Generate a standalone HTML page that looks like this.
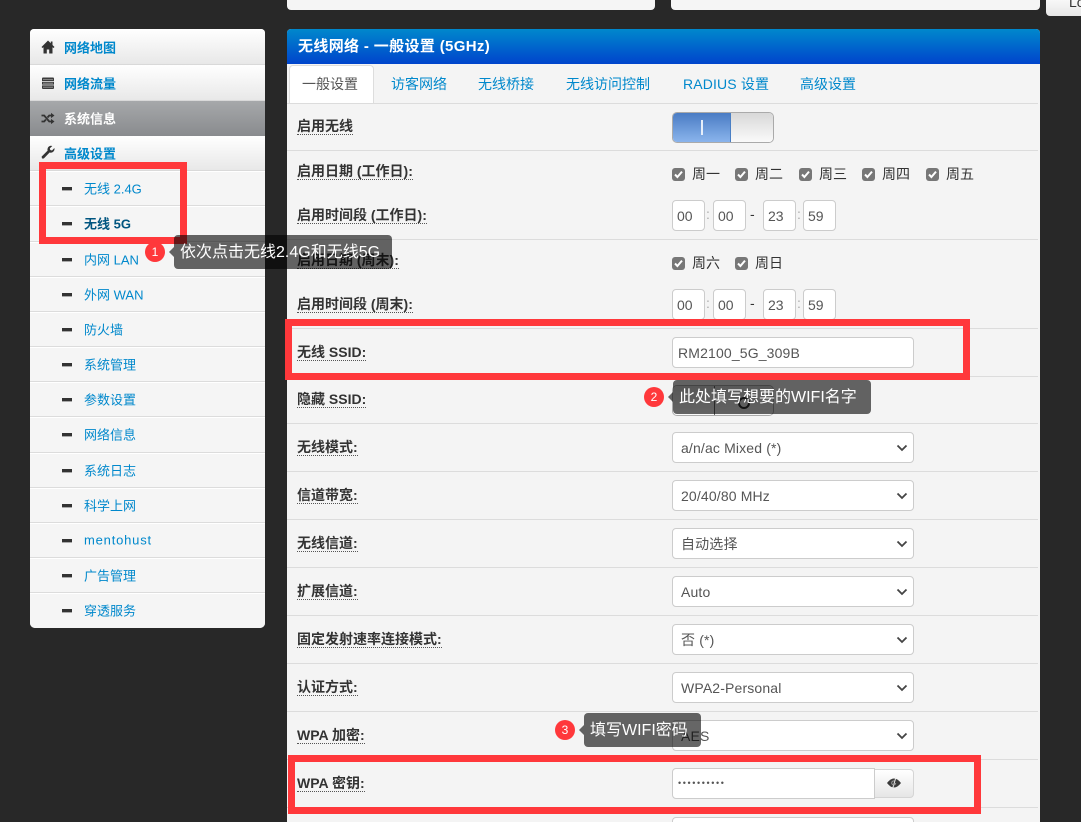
<!DOCTYPE html>
<html lang="zh">
<head>
<meta charset="utf-8">
<title>无线网络</title>
<style>
*{box-sizing:border-box}
html,body{margin:0;padding:0;width:1081px;height:822px;overflow:hidden;background:#282828;font-family:"Liberation Sans","Noto Sans CJK SC",sans-serif;font-size:13px;color:#333}
.a{position:absolute}
#side{left:30px;top:29px;width:235px;height:599px;background:#f5f5f5;border-radius:4px 4px 5px 5px;overflow:hidden}
.m{position:absolute;left:0;width:235px;background:linear-gradient(#fff,#e8e8e8);border-bottom:1px solid #d9d9d9;color:#0088cc;font-weight:bold;font-size:13px}
.m span{position:absolute;left:34px;top:50%;transform:translateY(-50%);white-space:nowrap}
.m svg{position:absolute;left:11px}
.act{background:linear-gradient(#a6a8aa,#898b8e);color:#fff;border:0}
.s{position:absolute;left:0;width:235px;background:#f5f5f5;border-bottom:1px solid #dcdcdc;border-top:1px solid #fff;color:#0088cc;font-size:13px}
.s i{position:absolute;left:32px;top:15px;width:10px;height:3px;background:#333;box-shadow:0 1px 0 #aaa}
.s b{position:absolute;left:54px;top:50%;transform:translateY(calc(-50% - 1px));font-weight:normal;white-space:nowrap}
#main{left:287px;top:29px;width:753px;height:793px;background:#f4f4f4;border-radius:4px 4px 0 0;overflow:hidden}
#hd{left:0;top:0;width:753px;height:35px;background:linear-gradient(#0088cc,#0044cc);color:#fff;font-weight:bold;font-size:15px;letter-spacing:.35px;line-height:36px;padding-left:11px}
.tab{position:absolute;top:37px;color:#0088cc;font-size:14px;line-height:36px;white-space:nowrap}
.ln{position:absolute;left:0;width:751px;height:1px;background:#dcdcdc}
.lb{position:absolute;left:10px;font-weight:bold;font-size:14px;padding-top:2px;line-height:15px;border-bottom:1px dotted #555;white-space:nowrap;color:#333}
.ck{position:absolute;width:13px;height:13px;background:#777;border-radius:3px}
.ck svg{position:absolute;left:1px;top:1px}
.ct{position:absolute;font-size:14px;line-height:16px;white-space:nowrap}
.t{position:absolute;width:33px;height:31px;background:#fff;border:1px solid #ccc;border-radius:4px;font-size:14px;line-height:30px;padding-left:4px;color:#555}
.sel,.inp{position:absolute;left:385px;width:242px;height:31px;background:#fff;border:1px solid #ccc;border-radius:4px;font:14px "Liberation Sans","Noto Sans CJK SC",sans-serif;letter-spacing:.15px;color:#555;line-height:30px;padding-left:8px}
.sel svg{position:absolute;right:5px;top:11px}
.sw{position:absolute;left:385px;width:102px;height:31px;border:1px solid #aaa;border-radius:5px;overflow:hidden}
.r{position:absolute;border:7px solid #ff383b}
.tip{position:absolute;background:rgba(0,0,0,.6);border-radius:4px;color:#fff;font-size:16px;height:34px;line-height:36px;padding-left:6px;white-space:nowrap}
.tip:before{content:"";position:absolute;left:-5px;top:12px;border:5px solid transparent;border-left:0;border-right-color:rgba(0,0,0,.6)}
.bd{position:absolute;width:20px;height:20px;border-radius:50%;background:#ff383b;color:#fff;font-size:12px;line-height:20px;text-align:center}
</style>
</head>
<body>
<div class="a" style="left:287px;top:-5px;width:368px;height:15px;background:#f5f5f5;border-radius:4px"></div>
<div class="a" style="left:671px;top:-5px;width:369px;height:15px;background:#f5f5f5;border-radius:4px"></div>
<div class="a" style="left:1046px;top:-6px;width:50px;height:22px;background:linear-gradient(#fff,#e6e6e6);border-radius:4px;color:#333;font-size:14px;line-height:17px;padding-left:23px">Lo</div>

<div id="side" class="a">
 <div class="m" style="top:0;height:36px"><svg style="top:11px" width="14" height="14" viewBox="0 0 14 14"><path d="M7 .5 .5 7 1.5 8 2.5 7.2V13.5H5.8V9.5H8.2V13.5H11.5V7.2L12.5 8 13.5 7 11.5 5V1.5H9.8V3.3z" fill="#333"/></svg><span>网络地图</span></div>
 <div class="m" style="top:36px;height:36px"><svg style="top:12px" width="14" height="14" viewBox="0 0 14 14"><path d="M1 1.5Q1 .5 2 .5H12Q13 .5 13 1.5V4H1zM1 4.8H13V7.6H1zM1 8.4H13V11Q13 12 12 12H2Q1 12 1 11z" fill="#3c3c3c"/><path d="M2 2.4H12M2 6.2H12M2 10.2H12" stroke="#9a9a9a" stroke-width=".8"/></svg><span>网络流量</span></div>
 <div class="m act" style="top:72px;height:35px"><svg style="top:11px" width="14" height="14" viewBox="0 0 14 14"><path d="M0.5 3.5H3.2L8.2 9.5H10.2M0.5 9.5H3.2L4.9 7.5M6.5 5.5L8.2 3.5H10.2" fill="none" stroke="#333" stroke-width="1.8"/><path d="M10 .9 13.5 3.5 10 6.1zM10 6.9 13.5 9.5 10 12.1z" fill="#333"/></svg><span style="margin-top:-1px">系统信息</span></div>
 <div class="m" style="top:107px;height:35px"><svg style="top:9px" width="14" height="14" viewBox="0 0 14 14"><path d="M1 13.5 .6 11.6 6.6 5.6Q6 2.6 8.3 1.2 9.8.4 11.3 1L8.8 3.4 9.3 5 11 5.5 13.4 3Q13.8 5 12.6 6.4 10.9 8.2 8.6 7.5L2.8 13.5z" fill="#333"/></svg><span>高级设置</span></div>
 <div class="s" style="top:142px;height:35px"><i></i><b>无线 2.4G</b></div>
 <div class="s" style="top:177px;height:36px"><i></i><b style="font-weight:bold;color:#005580">无线 5G</b></div>
 <div class="s" style="top:213px;height:35px"><i></i><b>内网 LAN</b></div>
 <div class="s" style="top:248px;height:35px"><i></i><b>外网 WAN</b></div>
 <div class="s" style="top:283px;height:35px"><i></i><b>防火墙</b></div>
 <div class="s" style="top:318px;height:35px"><i></i><b>系统管理</b></div>
 <div class="s" style="top:353px;height:35px"><i></i><b>参数设置</b></div>
 <div class="s" style="top:388px;height:36px"><i></i><b>网络信息</b></div>
 <div class="s" style="top:424px;height:35px"><i></i><b>系统日志</b></div>
 <div class="s" style="top:459px;height:35px"><i></i><b>科学上网</b></div>
 <div class="s" style="top:494px;height:35px"><i></i><b style="letter-spacing:.8px">mentohust</b></div>
 <div class="s" style="top:529px;height:35px"><i></i><b>广告管理</b></div>
 <div class="s" style="top:564px;height:35px;border-bottom:0"><i></i><b>穿透服务</b></div>
</div>

<div id="main" class="a">
 <div id="hd" class="a">无线网络 - 一般设置 (5GHz)</div>
 <div class="a" style="left:2px;top:36px;width:85px;height:39px;background:#fff;border:1px solid #ddd;border-bottom:0;border-radius:4px 4px 0 0"></div>
 <div class="tab" style="left:15px;color:#555">一般设置</div>
 <div class="tab" style="left:104px">访客网络</div>
 <div class="tab" style="left:191px">无线桥接</div>
 <div class="tab" style="left:279px">无线访问控制</div>
 <div class="tab" style="left:396px;letter-spacing:.15px">RADIUS 设置</div>
 <div class="tab" style="left:513px">高级设置</div>
 <div class="ln" style="top:74px"></div>
 <div class="ln" style="top:121px"></div>
 <div class="ln" style="top:210px"></div>
 <div class="ln" style="top:299px"></div>
 <div class="ln" style="top:347px"></div>
 <div class="ln" style="top:394px"></div>
 <div class="ln" style="top:442px"></div>
 <div class="ln" style="top:490px"></div>
 <div class="ln" style="top:538px"></div>
 <div class="ln" style="top:586px"></div>
 <div class="ln" style="top:634px"></div>
 <div class="ln" style="top:682px"></div>
 <div class="ln" style="top:730px"></div>
 <div class="ln" style="top:778px"></div>

 <div class="lb" style="top:88px">启用无线</div>
 <div class="lb" style="top:133px">启用日期 (工作日):</div>
 <div class="lb" style="top:177px">启用时间段 (工作日):</div>
 <div class="lb" style="top:222px">启用日期 (周末):</div>
 <div class="lb" style="top:266px">启用时间段 (周末):</div>
 <div class="lb" style="top:314px">无线 SSID:</div>
 <div class="lb" style="top:361px">隐藏 SSID:</div>
 <div class="lb" style="top:409px">无线模式:</div>
 <div class="lb" style="top:457px">信道带宽:</div>
 <div class="lb" style="top:505px">无线信道:</div>
 <div class="lb" style="top:553px">扩展信道:</div>
 <div class="lb" style="top:601px">固定发射速率连接模式:</div>
 <div class="lb" style="top:649px">认证方式:</div>
 <div class="lb" style="top:697px">WPA 加密:</div>
 <div class="lb" style="top:745px">WPA 密钥:</div>

 <div class="sw" style="top:83px">
  <div class="a" style="left:0;top:0;width:58px;height:29px;background:linear-gradient(#4a7cc4,#8ab4ec);border-right:1px solid #4a7fc4"></div>
  <div class="a" style="left:28px;top:7px;width:2px;height:15px;background:#e6eefa"></div>
  <div class="a" style="left:58px;top:0;width:42px;height:29px;background:linear-gradient(#d8d8d8,#fafafa)"></div>
 </div>

 <div class="ck" style="left:385px;top:139px"><svg width="11" height="11" viewBox="0 0 11 11"><path d="M2 5.5 4.4 8 9 2.6" fill="none" stroke="#fff" stroke-width="2"/></svg></div><div class="ct" style="left:405px;top:137px">周一</div>
 <div class="ck" style="left:448px;top:139px"><svg width="11" height="11" viewBox="0 0 11 11"><path d="M2 5.5 4.4 8 9 2.6" fill="none" stroke="#fff" stroke-width="2"/></svg></div><div class="ct" style="left:468px;top:137px">周二</div>
 <div class="ck" style="left:512px;top:139px"><svg width="11" height="11" viewBox="0 0 11 11"><path d="M2 5.5 4.4 8 9 2.6" fill="none" stroke="#fff" stroke-width="2"/></svg></div><div class="ct" style="left:532px;top:137px">周三</div>
 <div class="ck" style="left:575px;top:139px"><svg width="11" height="11" viewBox="0 0 11 11"><path d="M2 5.5 4.4 8 9 2.6" fill="none" stroke="#fff" stroke-width="2"/></svg></div><div class="ct" style="left:595px;top:137px">周四</div>
 <div class="ck" style="left:639px;top:139px"><svg width="11" height="11" viewBox="0 0 11 11"><path d="M2 5.5 4.4 8 9 2.6" fill="none" stroke="#fff" stroke-width="2"/></svg></div><div class="ct" style="left:659px;top:137px">周五</div>

 <div class="t" style="left:385px;top:171px">00</div><div class="ct" style="left:419px;top:177px;color:#aaa">:</div>
 <div class="t" style="left:426px;top:171px">00</div><div class="ct" style="left:463px;top:177px">-</div>
 <div class="t" style="left:476px;top:171px">23</div><div class="ct" style="left:510px;top:177px;color:#aaa">:</div>
 <div class="t" style="left:516px;top:171px">59</div>

 <div class="ck" style="left:385px;top:228px"><svg width="11" height="11" viewBox="0 0 11 11"><path d="M2 5.5 4.4 8 9 2.6" fill="none" stroke="#fff" stroke-width="2"/></svg></div><div class="ct" style="left:405px;top:226px">周六</div>
 <div class="ck" style="left:448px;top:228px"><svg width="11" height="11" viewBox="0 0 11 11"><path d="M2 5.5 4.4 8 9 2.6" fill="none" stroke="#fff" stroke-width="2"/></svg></div><div class="ct" style="left:468px;top:226px">周日</div>

 <div class="t" style="left:385px;top:260px">00</div><div class="ct" style="left:419px;top:266px;color:#aaa">:</div>
 <div class="t" style="left:426px;top:260px">00</div><div class="ct" style="left:463px;top:266px">-</div>
 <div class="t" style="left:476px;top:260px">23</div><div class="ct" style="left:510px;top:266px;color:#aaa">:</div>
 <div class="t" style="left:516px;top:260px">59</div>

 <div class="inp" style="top:308px;padding-left:5px">RM2100_5G_309B</div>
 <div class="sw" style="top:356px">
  <div class="a" style="left:0;top:0;width:42px;height:29px;background:linear-gradient(#d8d8d8,#fafafa);border-right:1px solid #666"></div>
  <div class="a" style="left:42px;top:0;width:58px;height:29px;background:linear-gradient(#ddd,#f5f5f5)"></div>
  <div class="a" style="left:65px;top:11px;width:12px;height:12px;border:2px solid #333;border-radius:50%"></div>
 </div>

 <div class="sel" style="top:403px">a/n/ac Mixed (*)<svg width="12" height="8" viewBox="0 0 12 8"><path d="M1.5 1.5 6 6 10.5 1.5" fill="none" stroke="#444" stroke-width="1.8"/></svg></div>
 <div class="sel" style="top:451px">20/40/80 MHz<svg width="12" height="8" viewBox="0 0 12 8"><path d="M1.5 1.5 6 6 10.5 1.5" fill="none" stroke="#444" stroke-width="1.8"/></svg></div>
 <div class="sel" style="top:499px">自动选择<svg width="12" height="8" viewBox="0 0 12 8"><path d="M1.5 1.5 6 6 10.5 1.5" fill="none" stroke="#444" stroke-width="1.8"/></svg></div>
 <div class="sel" style="top:547px">Auto<svg width="12" height="8" viewBox="0 0 12 8"><path d="M1.5 1.5 6 6 10.5 1.5" fill="none" stroke="#444" stroke-width="1.8"/></svg></div>
 <div class="sel" style="top:595px">否 (*)<svg width="12" height="8" viewBox="0 0 12 8"><path d="M1.5 1.5 6 6 10.5 1.5" fill="none" stroke="#444" stroke-width="1.8"/></svg></div>
 <div class="sel" style="top:643px">WPA2-Personal<svg width="12" height="8" viewBox="0 0 12 8"><path d="M1.5 1.5 6 6 10.5 1.5" fill="none" stroke="#444" stroke-width="1.8"/></svg></div>
 <div class="sel" style="top:691px">AES<svg width="12" height="8" viewBox="0 0 12 8"><path d="M1.5 1.5 6 6 10.5 1.5" fill="none" stroke="#444" stroke-width="1.8"/></svg></div>

 <div class="inp" style="top:739px;width:203px;border-radius:4px 0 0 4px;padding-left:5px;font-size:9px;letter-spacing:1.6px;line-height:28px">••••••••••</div>
 <div class="a" style="left:588px;top:740px;width:39px;height:29px;background:linear-gradient(#fff,#e6e6e6);border:1px solid #d5d5d5;border-left:0;border-radius:0 4px 4px 0">
  <svg class="a" style="left:12px;top:7px" width="14" height="12" viewBox="0 0 14 12"><path d="M0 6Q3.5 1.5 7 1.5 10.5 1.5 14 6 10.5 10.5 7 10.5 3.5 10.5 0 6z" fill="#3a3a3a"/><path d="M9 0 5.5 12" stroke="#eee" stroke-width="1"/><path d="M8.7 6a2 2 0 1 1-1.4-2" fill="none" stroke="#999" stroke-width="1"/></svg>
 </div>
 <div class="inp" style="top:788px"></div>
</div>

<div class="r" style="left:39px;top:162px;width:148px;height:82px"></div>
<div class="r" style="left:285px;top:319px;width:685px;height:61px"></div>
<div class="r" style="left:288px;top:755px;width:693px;height:59px"></div>

<div class="bd" style="left:145px;top:242px">1</div>
<div class="tip" style="left:174px;top:235px;width:218px">依次点击无线2.4G和无线5G</div>
<div class="bd" style="left:644px;top:387px">2</div>
<div class="tip" style="left:673px;top:380px;width:198px">此处填写想要的WIFI名字</div>
<div class="bd" style="left:555px;top:720px">3</div>
<div class="tip" style="left:584px;top:713px;width:117px">填写WIFI密码</div>
</body>
</html>
